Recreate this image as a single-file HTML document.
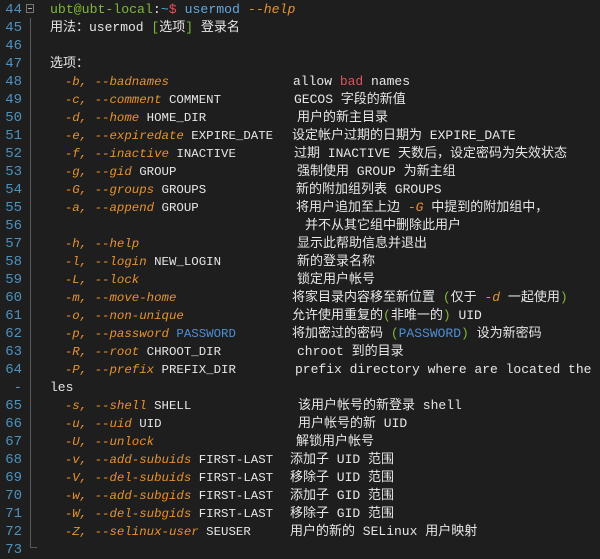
<!DOCTYPE html><html><head><meta charset="utf-8"><style>
body{margin:0;width:600px;height:555px;background:#1e1e1e;overflow:hidden;position:relative;font-family:"Liberation Mono","Noto Sans CJK SC",monospace;font-size:12.4px;color:#e6e6e6}
.r{position:absolute;left:0;height:18px;line-height:18px;white-space:pre;width:600px}
.n{position:absolute;right:578px;color:#4b93bf;text-align:right;font-size:14px}
.t{position:absolute;left:50px}
.d{position:absolute;font-size:13px}
.o{color:#e8922e;font-style:italic}
.b{color:#5fa8e0}
.g{color:#7fb83a}
.rd{color:#e0525c}
.p{color:#4d8fd6}
.fold{position:absolute;left:30px;top:18px;width:1px;height:530px;background:#5a5a5a}
.fold2{position:absolute;left:30px;top:547px;width:7px;height:1px;background:#5a5a5a}
.box{position:absolute;left:26px;top:4px;width:8px;height:9px;border:1px solid #777;box-sizing:border-box}
.box:after{content:"";position:absolute;left:1px;top:3px;width:4px;height:1px;background:#aaa}
</style></head><body>
<div class="fold"></div><div class="fold2"></div><div class="box"></div>
<div class="r" style="top:1px"><span class="n">44</span><span class="t" style="font-size:13.2px"><span class="g">ubt@ubt-local</span>:<span class="b">~</span><span class="rd">$</span> <span class="b">usermod</span> <span class="o">--help</span></span></div>
<div class="r" style="top:19px"><span class="n">45</span><span class="t" style="font-size:13px">用法：usermod <span class="g">[</span>选项<span class="g">]</span> 登录名</span></div>
<div class="r" style="top:37px"><span class="n">46</span></div>
<div class="r" style="top:55px"><span class="n">47</span><span class="t" style="font-size:13px">选项：</span></div>
<div class="r" style="top:73px"><span class="n">48</span><span class="t">  <span class="o">-b, --badnames</span></span><span class="d" style="left:293px">allow <span class="rd">bad</span> names</span></div>
<div class="r" style="top:91px"><span class="n">49</span><span class="t">  <span class="o">-c, --comment</span> COMMENT</span><span class="d" style="left:294px">GECOS 字段的新值</span></div>
<div class="r" style="top:109px"><span class="n">50</span><span class="t">  <span class="o">-d, --home</span> HOME_DIR</span><span class="d" style="left:297px">用户的新主目录</span></div>
<div class="r" style="top:127px"><span class="n">51</span><span class="t">  <span class="o">-e, --expiredate</span> EXPIRE_DATE</span><span class="d" style="left:292px">设定帐户过期的日期为 EXPIRE_DATE</span></div>
<div class="r" style="top:145px"><span class="n">52</span><span class="t">  <span class="o">-f, --inactive</span> INACTIVE</span><span class="d" style="left:294px">过期 INACTIVE 天数后，设定密码为失效状态</span></div>
<div class="r" style="top:163px"><span class="n">53</span><span class="t">  <span class="o">-g, --gid</span> GROUP</span><span class="d" style="left:297px">强制使用 GROUP 为新主组</span></div>
<div class="r" style="top:181px"><span class="n">54</span><span class="t">  <span class="o">-G, --groups</span> GROUPS</span><span class="d" style="left:296px">新的附加组列表 GROUPS</span></div>
<div class="r" style="top:199px"><span class="n">55</span><span class="t">  <span class="o">-a, --append</span> GROUP</span><span class="d" style="left:296px">将用户追加至上边 <span class="o">-G</span> 中提到的附加组中，</span></div>
<div class="r" style="top:217px"><span class="n">56</span><span class="d" style="left:305px">并不从其它组中删除此用户</span></div>
<div class="r" style="top:235px"><span class="n">57</span><span class="t">  <span class="o">-h, --help</span></span><span class="d" style="left:297px">显示此帮助信息并退出</span></div>
<div class="r" style="top:253px"><span class="n">58</span><span class="t">  <span class="o">-l, --login</span> NEW_LOGIN</span><span class="d" style="left:297px">新的登录名称</span></div>
<div class="r" style="top:271px"><span class="n">59</span><span class="t">  <span class="o">-L, --lock</span></span><span class="d" style="left:297px">锁定用户帐号</span></div>
<div class="r" style="top:289px"><span class="n">60</span><span class="t">  <span class="o">-m, --move-home</span></span><span class="d" style="left:292px">将家目录内容移至新位置 <span class="g">(</span>仅于 <span class="o">-d</span> 一起使用<span class="g">)</span></span></div>
<div class="r" style="top:307px"><span class="n">61</span><span class="t">  <span class="o">-o, --non-unique</span></span><span class="d" style="left:292px">允许使用重复的<span class="g">(</span>非唯一的<span class="g">)</span> UID</span></div>
<div class="r" style="top:325px"><span class="n">62</span><span class="t">  <span class="o">-p, --password</span> <span class="p">PASSWORD</span></span><span class="d" style="left:292px">将加密过的密码 <span class="g">(</span><span class="p">PASSWORD</span><span class="g">)</span> 设为新密码</span></div>
<div class="r" style="top:343px"><span class="n">63</span><span class="t">  <span class="o">-R, --root</span> CHROOT_DIR</span><span class="d" style="left:297px">chroot 到的目录</span></div>
<div class="r" style="top:361px"><span class="n">64</span><span class="t">  <span class="o">-P, --prefix</span> PREFIX_DIR</span><span class="d" style="left:295px">prefix directory where are located the</span></div>
<div class="r" style="top:379px"><span class="n">-</span><span class="t" style="font-size:13px">les</span></div>
<div class="r" style="top:397px"><span class="n">65</span><span class="t">  <span class="o">-s, --shell</span> SHELL</span><span class="d" style="left:298px">该用户帐号的新登录 shell</span></div>
<div class="r" style="top:415px"><span class="n">66</span><span class="t">  <span class="o">-u, --uid</span> UID</span><span class="d" style="left:298px">用户帐号的新 UID</span></div>
<div class="r" style="top:433px"><span class="n">67</span><span class="t">  <span class="o">-U, --unlock</span></span><span class="d" style="left:296px">解锁用户帐号</span></div>
<div class="r" style="top:451px"><span class="n">68</span><span class="t">  <span class="o">-v, --add-subuids</span> FIRST-LAST</span><span class="d" style="left:290px">添加子 UID 范围</span></div>
<div class="r" style="top:469px"><span class="n">69</span><span class="t">  <span class="o">-V, --del-subuids</span> FIRST-LAST</span><span class="d" style="left:290px">移除子 UID 范围</span></div>
<div class="r" style="top:487px"><span class="n">70</span><span class="t">  <span class="o">-w, --add-subgids</span> FIRST-LAST</span><span class="d" style="left:290px">添加子 GID 范围</span></div>
<div class="r" style="top:505px"><span class="n">71</span><span class="t">  <span class="o">-W, --del-subgids</span> FIRST-LAST</span><span class="d" style="left:290px">移除子 GID 范围</span></div>
<div class="r" style="top:523px"><span class="n">72</span><span class="t">  <span class="o">-Z, --selinux-user</span> SEUSER</span><span class="d" style="left:290px">用户的新的 SELinux 用户映射</span></div>
<div class="r" style="top:541px"><span class="n">73</span></div>
</body></html>
